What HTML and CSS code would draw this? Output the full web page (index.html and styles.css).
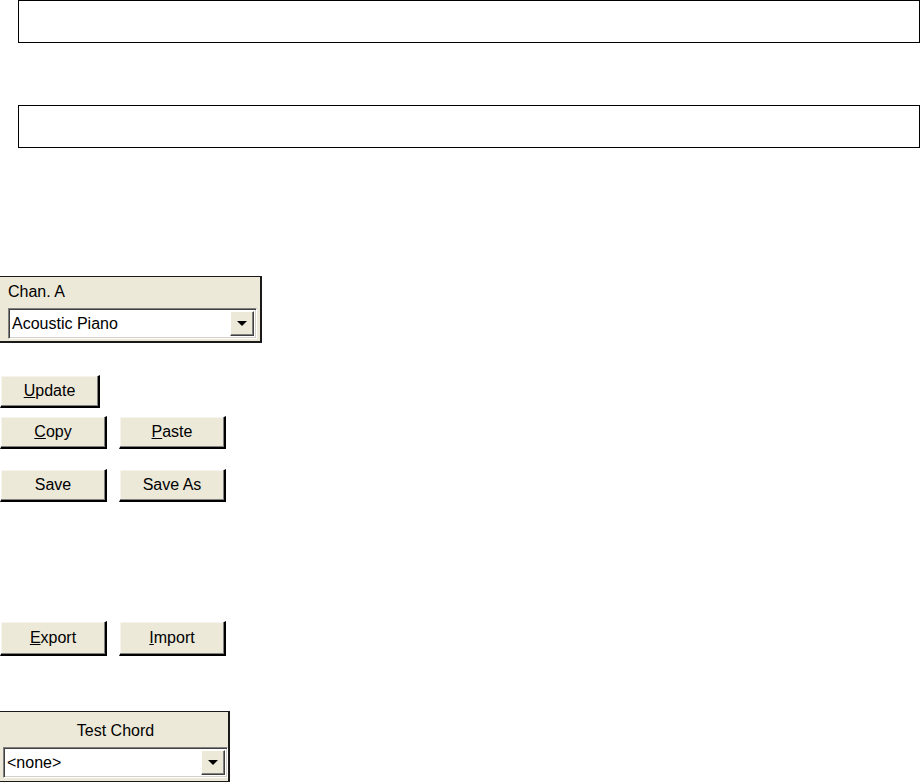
FILE: index.html
```html
<!DOCTYPE html>
<html lang="en">
<head>
    <meta charset="UTF-8">
    <title>Chord Settings</title>
    <link rel="stylesheet" href="styles.css">
</head>
<body>
    <div class="field" id="top-field"></div>
    <div class="field second" id="bottom-field"></div>

    <div class="panel chan">
      <div class="panel-label">Chan. A</div>
      <div class="combo">
        <span class="combo-text">Acoustic Piano</span>
        <span class="combo-btn"><span class="arrow"></span></span>
      </div>
    </div>

    <div class="row update-row">
      <button class="btn update"><u>U</u>pdate</button>
    </div>
    <div class="row copy-row">
      <button class="btn"><u>C</u>opy</button>
      <button class="btn"><u>P</u>aste</button>
    </div>
    <div class="row save-row">
      <button class="btn">Save</button>
      <button class="btn">Save As</button>
    </div>
    <div class="row export-row">
      <button class="btn"><u>E</u>xport</button>
      <button class="btn"><u>I</u>mport</button>
    </div>

    <div class="panel test">
      <div class="panel-label center">Test Chord</div>
      <div class="combo">
        <span class="combo-text">&lt;none&gt;</span>
        <span class="combo-btn"><span class="arrow"></span></span>
      </div>
    </div>
</body>
</html>
```

FILE: styles.css
```css
body {
    margin: 0;
    background: #fff;
    font-family: "Liberation Sans", Arial, sans-serif;
    font-size: 16px;
    color: #000;
  }

  .field {
    margin-left: 18px;
    width: 902px;
    height: 43px;
    border: 1px solid #000;
    box-sizing: border-box;
  }
  .field.second {
    margin-top: 62px;
  }

  .panel {
    background: #ece9d8;
    border-top: 1px solid #1a1a1a;
    border-right: 2px solid #1a1a1a;
    border-bottom: 2px solid #1a1a1a;
    box-sizing: border-box;
    padding: 0 3px 0 8px;
  }
  .panel.chan {
    margin-top: 128px;
    width: 262px;
    height: 67px;
  }
  .panel.test {
    margin-top: 55px;
    width: 230px;
    height: 72px;
    padding-left: 3px;
    padding-right: 0;
  }

  .panel-label {
    height: 31px;
    line-height: 30px;
  }
  .panel-label.center {
    text-align: center;
    height: 35px;
    line-height: 38px;
  }

  .combo {
    display: flex;
    align-items: center;
    height: 31px;
    background: #fff;
    border: 1px solid;
    border-color: #808080 #fff #fff #808080;
    box-shadow: inset 1px 1px 0 #404040, inset -1px -1px 0 #d4d0c8;
    box-sizing: border-box;
    padding: 2px 2px 2px 3px;
  }
  .combo-text {
    flex: 1;
  }
  .combo-btn {
    width: 24px;
    height: 25px;
    background: #ece9d8;
    border: 1px solid;
    border-color: #fff #404040 #404040 #fff;
    box-shadow: inset -1px -1px 0 #808080;
    box-sizing: border-box;
    display: flex;
    align-items: center;
    justify-content: center;
  }
  .arrow {
    width: 0;
    height: 0;
    border-left: 5px solid transparent;
    border-right: 5px solid transparent;
    border-top: 5px solid #000;
  }

  .row {
    display: flex;
    gap: 12px;
  }
  .update-row { margin-top: 32px; }
  .copy-row { margin-top: 8px; }
  .save-row { margin-top: 20px; }
  .export-row { margin-top: 119px; }

  .btn {
    width: 107px;
    height: 33px;
    margin: 0;
    padding: 0;
    background: #ece9d8;
    font-family: "Liberation Sans", Arial, sans-serif;
    font-size: 16px;
    color: #000;
    border: 1px solid;
    border-color: #fff #000 #000 #fff;
    border-right-width: 2px;
    border-bottom-width: 2px;
    box-shadow: inset -1px -1px 0 #808080, inset 1px 1px 0 #f5f4ee;
    box-sizing: border-box;
  }
  .btn.update {
    width: 100px;
  }
  .export-row .btn {
    height: 35px;
  }
```
